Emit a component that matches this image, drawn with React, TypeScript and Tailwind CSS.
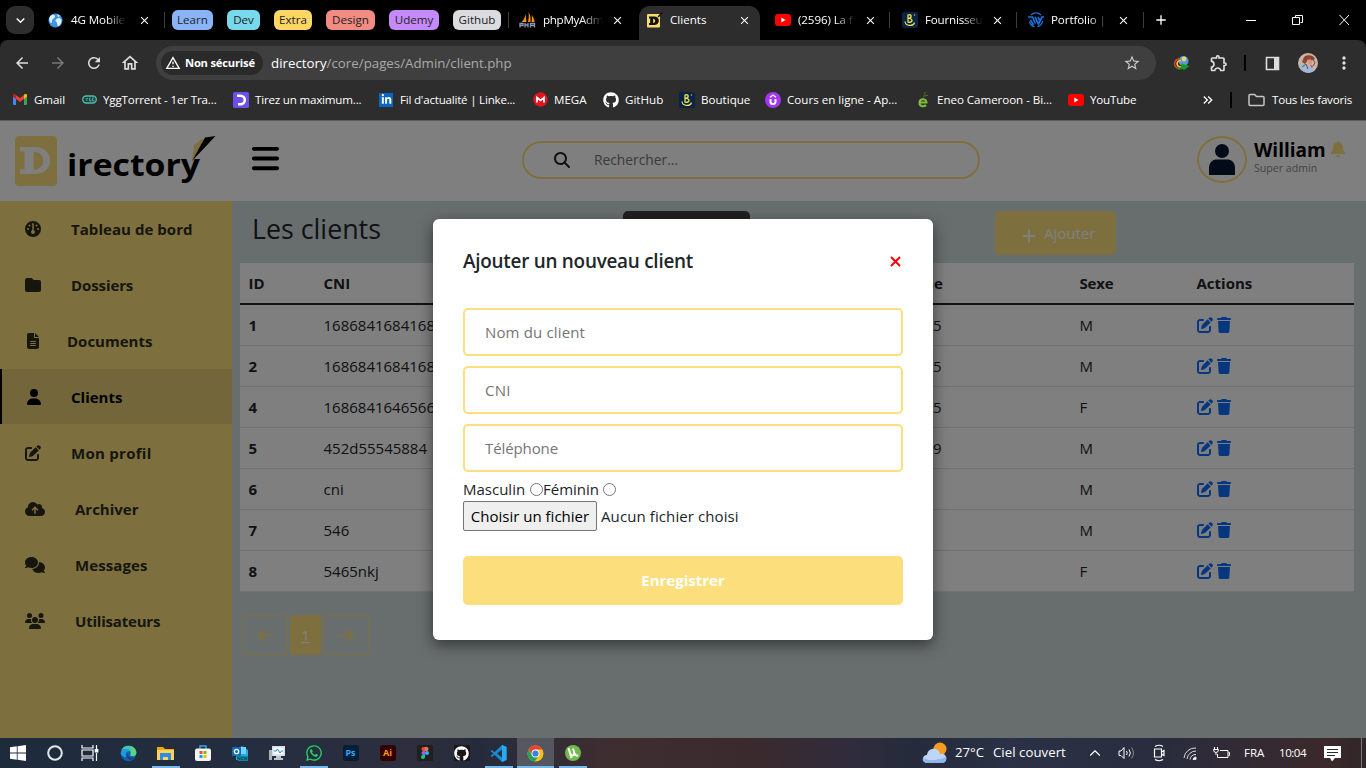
import React from "react";
import { FaBars, FaBell, FaCloudArrowUp, FaComments, FaFileLines, FaFolder, FaGauge, FaGithub, FaMagnifyingGlass, FaPenToSquare, FaTrash, FaUser, FaUsers, FaWhatsapp, FaLinkedinIn, FaArrowLeft, FaArrowRight, FaPlus } from "react-icons/fa6";
import { MdArrowBack, MdArrowForward, MdRefresh, MdOutlineHome, MdStarBorder, MdOutlineExtension, MdMoreVert, MdClose, MdAdd, MdOutlineWarningAmber, MdKeyboardArrowDown, MdKeyboardDoubleArrowRight } from "react-icons/md";
import { ChevronUp } from "lucide-react";

/* ---------- small drawings ---------- */

const Boutique = () => (
  <svg width="16" height="16" viewBox="0 0 16 16">
    <rect width="16" height="16" rx="2" fill="#0a2445" />
    <path d="M6 2.500v8M6 3c4-1.200 4.200 2.600.6 3.400 4.600-.4 4.600 4.400-.4 4" fill="none" stroke="#f2e14b" strokeWidth="1.300" />
    <path d="M3 9.500c.5 5 8.500 5 9.500 1" fill="none" stroke="#f2e14b" strokeWidth="1.200" />
    <circle cx="12.500" cy="3" r=".8" fill="#c9b14a" />
  </svg>
);

const DirectoryMark = () => (
  <svg width="17" height="17" viewBox="0 0 17 17">
    <rect x="1" y="2" width="13" height="13.500" rx="1" fill="#fcdb6d" />
    <path d="M3 4.500h5c6.500 0 6.500 8.500 0 8.500H3v-2h1.200V6.500H3zM7.200 6.700v4.200c2.600.2 2.600-4.400 0-4.200z" fill="#111" fillRule="evenodd" />
    <path d="M12 5l4.500-4.500" stroke="#111" strokeWidth="1.500" />
  </svg>
);

const Globe = () => (
  <svg width="15" height="15" viewBox="0 0 15 15">
    <circle cx="7.500" cy="7.500" r="7" fill="#3f94dd" />
    <path d="M2 3.500C4 1 7 1.500 7 3.500S3.500 6 4 8s-1 2.500-2 1-1-4 0-5.500zM8.500 6c2-2 5-1 5 1.500S12 12.500 10.500 13 9.500 9 8 8.500 7.500 7 8.500 6zM9 1l3 2-2 1z" fill="#d9f0ff" />
  </svg>
);

const PhpMyAdmin = () => (
  <svg width="17" height="16" viewBox="0 0 17 16">
    <path d="M6.500 2L7.500 10H2.500C5 8 6 5 6.500 2zM9.500 0c2 3 2.500 7 2 10H9c.8-3 1-7 .5-10zM12.500 3c2 2 3 5 3 7h-3c.5-2 .6-5 0-7z" fill="#f29111" />
    <path d="M1 15.500v-4h3v2H1M6 11v4.500M6 13h3M9 11v4.500M11.500 15.500v-4h4v4M11.500 13.500h4" fill="none" stroke="#8f94b5" strokeWidth="1.300" />
  </svg>
);

const Portfolio = () => (
  <svg width="16" height="16" viewBox="0 0 16 16" fill="none" stroke="#1773e0">
    <path d="M3 3a7 7 0 0110 0M14.500 9a7 7 0 01-5 5.800M6.500 14.800a7 7 0 01-5-5.300" strokeWidth="1.300" />
    <path d="M0 5h4.500l3 6.500M7 5l3.500 7L14 5h2M10 5l1.500 3M2.500 8l3 5" strokeWidth="1.700" />
  </svg>
);

const Gmail = () => (
  <svg width="14" height="11" viewBox="0 0 14 11">
    <path d="M0 2.500V10q0 1 1 1h2V4.500z" fill="#4285f4" />
    <path d="M14 2.500V10q0 1-1 1h-2V4.500z" fill="#34a853" />
    <path d="M11 1.200v3.700l3-2.200V1.500C14 0 12.200-.3 11 .6z" fill="#fbbc04" />
    <path d="M3 1.200v3.700L7 8l4-3.100V1L7 4z" fill="#ea4335" />
    <path d="M3 .8v4L0 2.700V1.500C0 0 1.800-.3 3 .6z" fill="#c5221f" />
  </svg>
);

const Ygg = () => (
  <svg width="15" height="9" viewBox="0 0 15 9">
    <rect x=".7" y="1" width="13.600" height="7" rx="3.500" fill="#14423e" stroke="#55b9a8" strokeWidth="1.400" />
    <path d="M3.500 3l1.300 1.500L6 3M4.800 4.500v1.700M9 3H7.500v3H9V4.700M12 3h-1.500v3H12V4.700" fill="none" stroke="#7ed8c8" strokeWidth=".6" />
  </svg>
);

const Tirez = () => (
  <svg width="16" height="16" viewBox="0 0 16 16">
    <rect width="16" height="16" rx="1.500" fill="#6f4de8" />
    <path d="M4 3.700h3.500a4.300 4.300 0 010 8.600H5" fill="none" stroke="#fff" strokeWidth="2.600" />
  </svg>
);

const Youtube = () => (
  <svg width="16" height="12" viewBox="0 0 16 12">
    <rect width="16" height="12" rx="3" fill="#f00" />
    <path d="M6.300 3.500v5l4.200-2.500z" fill="#fff" />
  </svg>
);

const Mega = () => (
  <svg width="15" height="15" viewBox="0 0 15 15">
    <circle cx="7.500" cy="7.500" r="7.200" fill="#e1141f" />
    <path d="M4 10.500v-5l3.500 3 3.500-3v5" fill="none" stroke="#fff" strokeWidth="1.700" />
  </svg>
);

const Cours = () => (
  <svg width="16" height="16" viewBox="0 0 16 16">
    <circle cx="8" cy="8" r="8" fill="#a435f0" />
    <path d="M5.500 7v2.800a2.500 2.300 0 005 0V7" fill="none" stroke="#fff" strokeWidth="2" />
    <path d="M5 5.300L8 3l3 2.300" fill="none" stroke="#fff" strokeWidth="1.300" />
  </svg>
);

const Eneo = () => (
  <svg width="13" height="16" viewBox="0 0 13 16" fill="none" stroke="#7fbf3b">
    <path d="M3 10.500h6.500C9.500 6.200 2.500 6 2.500 10.800c0 4 4.500 4.300 6.500 2.200" strokeWidth="2" />
    <path d="M7 5.500C6 3 8 4 8 0M8 4l3-1" strokeWidth=".9" stroke="#4b7d2e" />
  </svg>
);

const Idm = () => (
  <svg width="17" height="16" viewBox="0 0 17 16">
    <circle cx="10.500" cy="6" r="5" fill="#5e93dd" />
    <circle cx="11" cy="4" r="2.400" fill="#d4dc74" />
    <path d="M7 4C0 4 0 13 6 13.500" fill="none" stroke="#e2412c" strokeWidth="1.400" />
    <path d="M8 5.500C2.500 5.500 3 12 8 12" fill="none" stroke="#f4c52b" strokeWidth="1.600" />
    <path d="M3.500 13c4 1 5-1 5-4.500l8 2.500-6 4.500-.5-2c-2 1.500-5 1.500-6.500-.5" fill="#179c28" />
  </svg>
);

const Avatar = () => (
  <svg width="20" height="20" viewBox="0 0 20 20">
    <circle cx="10" cy="10" r="10" fill="#c9b3a8" />
    <path d="M1 12c5-2 10-1 16 5-4 4.500-13 4-16-5z" fill="#9fb9da" />
    <path d="M6 4c3-3 10-2 11 2l-4 2-3-1-3 4-3-2z" fill="#8d4532" />
    <path d="M9 7c3-2 6 0 5 3s-4 2-5-3z" fill="#d8977c" />
    <path d="M4 14l4-3 2 5M15 6l2 4-2 3" stroke="#735044" fill="none" />
    <path d="M12 12l3 1-1 2z" fill="#e12c40" />
  </svg>
);

const Logo = () => (
  <svg width="204" height="56" viewBox="0 0 204 56">
    <rect x="2" y="4" width="42" height="50" rx="4" fill="#fcdf7c" />
    <path d="M7 15h15c20 0 20 27 0 27H7v-4.500h4.500v-18H7zM20.500 20v17.500c13 1 13-18.500 0-17.500z" fill="#fff" fillRule="evenodd" />
    <path d="M179 29l2-16 8-6 2 2z" fill="#fcdf7c" />
    <path d="M179 29l13-23.500 10.500-1.500z" fill="#000" />
    <text x="54" y="43.700" fontFamily="Open Sans, sans-serif" fontSize="31" fontWeight="700" textLength="133" lengthAdjust="spacingAndGlyphs">irectory</text>
  </svg>
);

/* ---------- browser ---------- */

const Close = () => <MdClose className="shrink-0 text-[13px] text-white" />;

const Tab = ({ icon, label, className, labelClass }: { icon: React.ReactNode; label: string; className: string; labelClass: string }) => (
  <div className={"flex h-10 shrink-0 items-center " + className}>
    <span className="flex w-[17px] shrink-0 justify-center">{icon}</span>
    <span className={"ml-[7px] overflow-hidden whitespace-nowrap text-[11.600px] text-white " + labelClass}>{label}</span>
    <Close />
  </div>
);

const Fade = "[mask-image:linear-gradient(to_right,black_65%,transparent)]";

const Tabs = () => (
  <div className="flex h-10 items-center bg-black">
    <div className="ml-[6px] flex h-7 w-7 items-center justify-center rounded-[9px] bg-[#2d2d2d] text-[17px] text-white"><MdKeyboardArrowDown /></div>
    <Tab icon={<Globe />} label="4G Mobile" className="ml-[13px] w-[104px]" labelClass={"mr-[12px] w-[58px] tracking-[-0.1px] " + Fade} />
    <div className="ml-[13px] h-4 w-px bg-[#3b3b3b]" />
    <div className="ml-[7px] flex text-[11.600px] text-[#222]">
      <div className="flex h-5 w-[41px] items-center justify-center rounded-[6px] bg-[#8ab4f8]">Learn</div>
      <div className="ml-[14px] flex h-5 w-[33px] items-center justify-center rounded-[6px] bg-[#78d9ec]">Dev</div>
      <div className="ml-[14px] flex h-5 w-[38px] items-center justify-center rounded-[6px] bg-[#fdd663]">Extra</div>
      <div className="ml-[14px] flex h-5 w-[49px] items-center justify-center rounded-[6px] bg-[#f28b82]">Design</div>
      <div className="ml-[14px] flex h-5 w-[50px] items-center justify-center rounded-[6px] bg-[#c58af9]">Udemy</div>
      <div className="ml-[14px] flex h-5 w-[48px] items-center justify-center rounded-[6px] bg-[#dadce0]">Github</div>
    </div>
    <div className="ml-[7px] h-4 w-px bg-[#3b3b3b]" />
    <Tab icon={<PhpMyAdmin />} label="phpMyAdm" className="ml-[10px] w-[120px]" labelClass={"mr-[8px] w-[60px] tracking-[-0.3px] " + Fade} />
    <div className="h-[34px] w-[121px] self-end rounded-t-[11px] bg-[#2d2d2d]">
      <div className="-mt-[6px] flex h-10 items-center pl-[7px]">
        <DirectoryMark />
        <span className="ml-[7px] w-[68px] text-[11.600px] text-white">Clients</span>
        <Close />
      </div>
    </div>
    <Tab icon={<Youtube />} label="(2596) La f" className="ml-[14px] w-[103px]" labelClass={"mr-[9px] w-[59px] tracking-[-0.1px] " + Fade} />
    <div className="ml-[12px] h-4 w-px bg-[#3b3b3b]" />
    <Tab icon={<Boutique />} label="Fournisseu" className="ml-[11px] w-[103px]" labelClass={"mr-[8px] w-[60px] tracking-[-0.2px] " + Fade} />
    <div className="ml-[12px] h-4 w-px bg-[#3b3b3b]" />
    <Tab icon={<Portfolio />} label="Portfolio |" className="ml-[10px] w-[103px]" labelClass={"mr-[8px] w-[59px] tracking-[-0.1px] " + Fade} />
    <div className="ml-[13px] h-4 w-px bg-[#3b3b3b]" />
    <MdAdd className="ml-[9px] text-[16px] text-white" />
    <svg className="ml-auto mr-[15px]" width="105" height="12" viewBox="0 0 105 12" fill="none" stroke="#fff">
      <path d="M0 6.500h10M49.500 3.500v-2h7v7h-2M46.500 3.500h7v7h-7zM93.500 1l9.500 10M103 1l-9.500 10" />
    </svg>
  </div>
);

const Toolbar = () => (
  <div className="bg-black">
    <div className="flex h-10 w-full items-center rounded-t-[8px] bg-[#2d2d2d] pt-[6px] text-[#dedede]">
      <MdArrowBack className="ml-[13px] text-[18px]" />
      <MdArrowForward className="ml-[18px] text-[18px] text-[#777]" />
      <MdRefresh className="ml-[18px] text-[18px]" />
      <MdOutlineHome className="ml-[17px] text-[20px]" />
      <div className="ml-[16px] flex h-[34px] w-[1000px] items-center rounded-full bg-[#3f3f3f]">
        <div className="ml-[5px] flex h-6 w-[102px] items-center rounded-full bg-[#2a2a2a] pl-[4px] text-white">
          <MdOutlineWarningAmber className="text-[16px]" />
          <span className="ml-[4px] whitespace-nowrap text-[11.200px] font-bold tracking-[-0.2px]">Non sécurisé</span>
        </div>
        <span className="ml-[8px] pt-px text-[13.300px] text-[#aaa]"><span className="text-white">directory</span>/core/pages/Admin/client.php</span>
        <MdStarBorder className="ml-auto mr-[15px] text-[18px] text-[#c8c8c8]" />
      </div>
      <span className="ml-[17px]"><Idm /></span>
      <MdOutlineExtension className="ml-[19px] text-[20px]" />
      <div className="ml-[15px] h-4 w-[2px] bg-black" />
      <svg className="ml-[19px]" width="15" height="15" viewBox="0 0 15 15"><path d="M1.500 1.500h12v12h-12z" fill="none" stroke="#ddd" strokeWidth="1.600" /><path d="M9 1h5v13H9z" fill="#ddd" /></svg>
      <span className="ml-[18px]"><Avatar /></span>
      <MdMoreVert className="ml-[16px] text-[20px]" />
    </div>
  </div>
);

const Mark = ({ icon, label, className, gap }: { icon: React.ReactNode; label: string; className: string; gap: string }) => (
  <div className={"flex shrink-0 items-center whitespace-nowrap " + className}>
    {icon}
    <span className={gap}>{label}</span>
  </div>
);

const Bookmarks = () => (
  <div className="flex h-[41px] items-center border-b border-[#5b5b5b] bg-[#2d2d2d] pl-[13px] text-[11.600px] text-white">
    <Mark icon={<Gmail />} label="Gmail" gap="ml-[7px] tracking-[-0.1px]" className="w-[69px]" />
    <Mark icon={<Ygg />} label="YggTorrent - 1er Tra..." gap="ml-[6px] tracking-[-0.15px]" className="w-[151px]" />
    <Mark icon={<Tirez />} label="Tirez un maximum..." gap="ml-[6px] tracking-[-0.2px]" className="w-[146px]" />
    <Mark icon={<span className="flex h-[14px] w-[14px] items-center justify-center bg-[#0a66c2] text-[11px]"><FaLinkedinIn /></span>} label="Fil d'actualité | Linke..." gap="ml-[7px] tracking-[-0.22px]" className="w-[154px]" />
    <Mark icon={<Mega />} label="MEGA" gap="ml-[6px]" className="w-[70px]" />
    <Mark icon={<FaGithub className="text-[16px]" />} label="GitHub" gap="ml-[6px]" className="w-[76px]" />
    <Mark icon={<Boutique />} label="Boutique" gap="ml-[6px]" className="w-[86px]" />
    <Mark icon={<Cours />} label="Cours en ligne - Ap..." gap="ml-[6px]" className="w-[152px]" />
    <Mark icon={<Eneo />} label="Eneo Cameroon - Bi..." gap="ml-[7px] tracking-[-0.05px]" className="w-[151px]" />
    <Mark icon={<Youtube />} label="YouTube" gap="ml-[6px] tracking-[-0.2px]" className="w-[132px]" />
    <MdKeyboardDoubleArrowRight className="text-[16px]" />
    <div className="ml-[14px] h-4 w-[2px] bg-black" />
    <svg className="ml-[16px]" width="17" height="14" viewBox="0 0 17 14" fill="none" stroke="#c5c5c5" strokeWidth="1.500"><path d="M2 1.500h4.500l2 2H15q1 0 1 1v7q0 1-1 1H2q-1 0-1-1v-9q0-1 1-1z" /></svg>
    <span className="ml-[7px] whitespace-nowrap tracking-[-0.2px]">Tous les favoris</span>
  </div>
);

/* ---------- page ---------- */

const Header = () => (
  <header className="flex h-20 items-start bg-white">
    <div className="ml-[13px] mt-[11px]"><Logo /></div>
    <FaBars className="ml-[33px] mt-[22px] text-[31px] text-black" />
    <div className="ml-[241px] mt-[20px] flex h-[38px] w-[458px] items-center rounded-full border-2 border-[#fcdf7c]">
      <FaMagnifyingGlass className="ml-[30px] text-[16px] text-[#222]" />
      <span className="ml-[24px] text-[13.800px] text-[#757575]">Rechercher...</span>
    </div>
    <div className="ml-[217px] mt-[15px] flex h-[47px] w-[50px] items-center justify-center rounded-[50%] border-2 border-[#fcdf7c]">
      <svg width="26" height="31" viewBox="0 0 26 31" fill="#061632"><circle cx="13" cy="7" r="7" /><path d="M0 31v-7c0-6 4-8.500 8-8.500h10c4 0 8 2.500 8 8.500v7z" /></svg>
    </div>
    <div className="ml-[7px] mt-[16px] w-[76px] whitespace-nowrap">
      <div className="text-[19px] font-bold leading-[26px] text-black">William</div>
      <div className="text-[10.600px] leading-[11px] text-[#888]">Super admin</div>
    </div>
    <FaBell className="mt-[20px] text-[16px] text-[#fcdf7c]" />
  </header>
);

const menu = [
  { icon: <FaGauge />, label: "Tableau de bord", at: "w-[46px]", fit: "tracking-[0.05px]" },
  { icon: <FaFolder />, label: "Dossiers", at: "w-[46px]", fit: "tracking-[-0.1px]" },
  { icon: <FaFileLines />, label: "Documents", at: "w-[42px]", fit: "" },
  { icon: <FaUser className="ml-px text-[16px]" />, label: "Clients", at: "w-[46px]", fit: "", active: true },
  { icon: <FaPenToSquare />, label: "Mon profil", at: "w-[46px]", fit: "tracking-[0.28px]" },
  { icon: <FaCloudArrowUp className="w-5" />, label: "Archiver", at: "w-[50px]", fit: "" },
  { icon: <FaComments className="w-5" />, label: "Messages", at: "w-[50px]", fit: "tracking-[0.1px]" },
  { icon: <FaUsers className="w-5" />, label: "Utilisateurs", at: "w-[50px]", fit: "tracking-[-0.2px]" },
];

const Sidebar = () => (
  <nav className="w-[232px] shrink-0 bg-[#fcdf7c]">
    {menu.map((m) => (
      <div
        key={m.label}
        className={
          "mb-px flex h-[55px] items-center border-l-2 pl-[23px] pt-px text-[15px] " +
          (m.active ? "border-black bg-[#e5cc75] text-black" : "border-transparent text-[#2d2d1c]")
        }
      >
        <span className={"flex text-[16px] " + m.at}>{m.icon}</span>
        <span className={"font-bold " + m.fit}>{m.label}</span>
      </div>
    ))}
  </nav>
);

const rows = [
  ["1", "1686841684168", "699555555", "M"],
  ["2", "1686841684168", "699555555", "M"],
  ["4", "1686841646566", "699555555", "F"],
  ["5", "452d55545884", "699555559", "M"],
  ["6", "cni", "6995", "M"],
  ["7", "546", "6995", "M"],
  ["8", "5465nkj", "6995555s", "F"],
];

const grid = "grid grid-cols-[75px_541px_215px_117px_1fr] items-center pl-[8.5px]";

const Main = () => (
  <main className="flex-1 bg-[#d1dbdd] px-[8px]">
    <div className="flex h-[62px] items-start">
      <h1 className="ml-[12px] mt-[8px] w-[371px] text-[26.800px] font-medium leading-[40px] text-[#212529]">Les clients</h1>
      <div className="mt-[10px] h-[44px] w-[127px] rounded-[5px] bg-[#414141]" />
      <div className="ml-[245px] mt-[10px] flex h-[44px] w-[121px] items-center rounded-[5px] bg-[#fcdf7c] pl-[26px] text-[15px] text-white">
        <FaPlus className="mt-[5px] text-[16px]" />
        <span className="ml-[7px]">Ajouter</span>
      </div>
    </div>
    <div className="w-[1114px] bg-white text-[15px] text-[#212529]">
      <div className={grid + " h-[42px] border-b-2 border-[#212529] font-bold"}>
        <span>ID</span><span>CNI</span><span>Téléphone</span><span className="tracking-[-0.2px]">Sexe</span><span>Actions</span>
      </div>
      {rows.map((r) => (
        <div key={r[0]} className={grid + " h-[41px] border-b border-[#dee2e6]"}>
          <span className="font-bold">{r[0]}</span>
          <span>{r[1]}</span>
          <span>{r[2]}</span>
          <span>{r[3]}</span>
          <span className="flex gap-[3px] text-[16px] text-[#0d6efd]"><FaPenToSquare /><FaTrash className="w-[16px]" /></span>
        </div>
      ))}
    </div>
    <div className="ml-[2px] mt-[23px] flex gap-[2px] text-[17px] text-[#fcdf7c]">
      <div className="flex h-[40px] w-[46px] items-center justify-center rounded-[3px] border border-[#fcdf7c]"><FaArrowLeft /></div>
      <div className="flex h-[40px] w-[31px] items-center justify-center rounded-[3px] bg-[#fcdf7c] text-[15px] text-white underline">1</div>
      <div className="flex h-[40px] w-[46px] items-center justify-center rounded-[3px] border border-[#fcdf7c]"><FaArrowRight /></div>
    </div>
  </main>
);

const Field = ({ label, fit }: { label: string; fit: string }) => (
  <div className={"mb-[10px] flex h-[48px] items-center rounded-[5px] border-2 border-[#fcdf7c] pl-[20px] text-[15px] text-[#757575] " + fit}>{label}</div>
);

const Radio = () => <span className="inline-block h-[13px] w-[13px] rounded-full border border-[#767676] bg-white" />;

const Modal = () => (
  <div className="absolute left-[433px] top-[98px] h-[421px] w-[500px] rounded-[6px] bg-white px-[30px] text-[15px] text-[#212529] shadow-[0_5px_15px_rgba(0,0,0,0.5)]">
    <div className="flex h-[89px] items-center justify-between pb-[4px]">
      <h2 className="text-[18.900px] font-semibold tracking-[-0.25px]">Ajouter un nouveau client</h2>
      <svg className="mr-[2px]" width="11" height="11" viewBox="0 0 11 11"><path d="M1 1l9 9M10 1l-9 9" stroke="#f00" strokeWidth="2" /></svg>
    </div>
    <Field label="Nom du client" fit="tracking-[0.15px]" />
    <Field label="CNI" fit="tracking-[0.2px]" />
    <Field label="Téléphone" fit="tracking-[-0.1px]" />
    <div className="-mt-[5px] flex h-[24px] items-center whitespace-nowrap">
      <span className="w-[67px]">Masculin</span><Radio /><span className="w-[60px]">Féminin</span><Radio />
    </div>
    <div className="flex items-center">
      <div className="flex h-[30px] w-[134px] items-center justify-center whitespace-nowrap rounded-[2px] border border-[#767676] bg-[#efefef] text-black">Choisir un fichier</div>
      <span className="ml-[4px] tracking-[0.1px]">Aucun fichier choisi</span>
    </div>
    <div className="mt-[25px] flex h-[49px] items-center justify-center rounded-[5px] bg-[#fcdf7c] font-bold text-white">Enregistrer</div>
  </div>
);

/* ---------- taskbar ---------- */

const Slot = ({ children, bar, active }: { children: React.ReactNode; bar?: boolean; active?: boolean }) => (
  <div className={"flex h-[30px] w-[37px] shrink-0 flex-col items-center " + (active ? "bg-[#55565f]" : "")}>
    <div className="flex h-[28px] items-center pt-[2px]">{children}</div>
    {bar && <div className={"h-[2px] bg-[#76b9ed] " + (active ? "w-[37px]" : "w-[28px]")} />}
  </div>
);

const Taskbar = () => (
  <footer className="flex h-[30px] items-center bg-[linear-gradient(90deg,#1d2b3b_0%,#262e40_22%,#2e2e3d_30%,#252b3c_35%,#3f2e30_45%,#3a2a2d_55%,#302c3b_62%,#252b3c_67%,#2b3146_74%,#292c3d_85%,#3b292b_97%,#302629_100%)] text-white">
    <div className="-ml-px flex">
      <Slot><svg width="16" height="16" viewBox="0 0 16 16" fill="#fff"><path d="M0 2.200L6.800 1.300v6.300H0zM7.600 1.200L16 0v7.600H7.600zM0 8.400h6.800v6.300L0 13.800zM7.600 8.400H16V16l-8.400-1.200z" /></svg></Slot>
      <Slot><svg width="16" height="16" viewBox="0 0 16 16" fill="none" stroke="#e4e8ea" strokeWidth="2"><circle cx="8" cy="8" r="6.800" /></svg></Slot>
      <Slot><svg className="-ml-[3px]" width="18" height="16" viewBox="0 0 18 16" fill="none" stroke="#fff" strokeWidth="1.200"><path d="M1 0v3h11V0M1 16v-3h11v3M1 5h11v6H1zM15.500 0v4M15.500 8v8" /><path d="M14.300 4.500h2.500v2.500h-2.500z" fill="#fff" /></svg></Slot>
      <Slot>
        <svg width="17" height="17" viewBox="0 0 24 24"><circle cx="12" cy="12" r="11" fill="#0d62b8" /><path d="M1 11C3 5 11 4 14 9c-6-1-7 4-5 8-5 0-8-3-8-6z" fill="#1c9de0" /><path d="M1.500 9C4-2 21-1 23 10c1 6-5 6.500-8 5-1-1 1-2 0-5C12 4 4 5 1.500 9z" fill="#45c6b0" /><path d="M15 1.500c5 1 8 5 8 9 0 5-5 5.500-8 4.500-1-1 1-2 0-5z" fill="#62d47d" opacity=".8" /><path d="M11.500 12c-1.500 6 5 7.500 10 5-2 3-5 4-7 4-5-1-6-7-3-9z" fill="#21416c" /></svg>
      </Slot>
      <Slot bar><svg width="17" height="15" viewBox="0 0 17 15"><path d="M0 1h6l2 2h9v11H0z" fill="#f3a900" /><path d="M0 4h17v10H0z" fill="#ffd25e" /><path d="M3 14V7h11v7h-3v-3H6v3z" fill="#2d8de0" /></svg></Slot>
      <Slot><svg width="16" height="16" viewBox="0 0 16 16"><path d="M5 4V1h6v3" fill="none" stroke="#35a8e5" strokeWidth="1.500" /><rect y="3.500" width="16" height="12.500" rx="2" fill="#f4f4f4" /><path d="M4.500 6h3v3h-3z" fill="#f25022" /><path d="M8.500 6h3v3h-3z" fill="#7fba00" /><path d="M4.500 10h3v3h-3z" fill="#00a4ef" /><path d="M8.500 10h3v3h-3z" fill="#ffb900" /></svg></Slot>
      <Slot><svg width="16" height="16" viewBox="0 0 16 16"><path d="M4 5l6-4 6 4v10H4z" fill="#28a8ea" /><path d="M8 2h6v7H8z" fill="#75d2fa" /><rect y="2" width="9" height="9" rx="1" fill="#0f6cbd" /><circle cx="4.500" cy="6.500" r="2.200" fill="none" stroke="#fff" strokeWidth="1.300" /><path d="M4 11h12v5H6z" fill="#0c879c" /><path d="M6 14.500v-2l1.500 2v-2M11 12.500H9v2h2M12 12.500l.7 2 .7-2 .7 2 .7-2" fill="none" stroke="#063b49" strokeWidth=".7" /></svg></Slot>
      <Slot><svg width="16" height="16" viewBox="0 0 16 16"><path d="M0 5h3v10H0z" fill="#aab1b5" /><path d="M3 1h13v10H3z" fill="#d7dee2" /><path d="M4.500 2.500h10v7h-10z" fill="#f0fbff" /><path d="M5 6h2l1.500-2L11 8l1.500-2H14" fill="none" stroke="#2c8bc4" /><path d="M7 11h5v2h2v2H5v-2h2z" fill="#bfc6ca" /></svg></Slot>
      <Slot bar><FaWhatsapp className="text-[18px] text-[#25d366]" /></Slot>
      <Slot><span className="flex h-4 w-4 items-center justify-center rounded-[3px] bg-[#001e36] text-[9px] font-bold text-[#31a8ff]">Ps</span></Slot>
      <Slot><span className="flex h-4 w-4 items-center justify-center rounded-[3px] bg-[#330000] text-[9px] font-bold text-[#ff9a00]">Ai</span></Slot>
      <Slot><svg width="16" height="16" viewBox="0 0 16 16"><path d="M0 0h16v16H0z" fill="#202020" /><path d="M8 2H6.500a2 2 0 000 4H8z" fill="#f24e1e" /><path d="M8 2h1.500a2 2 0 010 4H8z" fill="#ff7262" /><path d="M8 6H6.500a2 2 0 000 4H8z" fill="#a259ff" /><circle cx="10" cy="8" r="2" fill="#1abcfe" /><path d="M8 10H6.500a2 2 0 101.500 2z" fill="#0acf83" /></svg></Slot>
      <Slot><span className="flex h-4 w-4 items-center justify-center bg-[#181818]"><FaGithub className="text-[15px]" /></span></Slot>
      <Slot bar><svg width="17" height="17" viewBox="0 0 17 17"><path d="M12 0l4.500 2v13L12 17 4.500 9.700 2 12 .5 11l3-2.500-3-2.500L2 5l2.500 2.300z" fill="#168bd5" /><path d="M12 4.500v8L7 8.500z" fill="#28303f" /><path d="M12 0l4.500 2v13L12 17z" fill="#2aa8f2" /></svg></Slot>
      <Slot bar active>
        <svg width="17" height="17" viewBox="0 0 17 17"><circle cx="8.500" cy="8.500" r="8" fill="#fbc116" /><path d="M1.600 4.500A8 8 0 0115.400 4.500H8.500L5 10.500z" fill="#ea4335" /><path d="M1.600 4.500A8 8 0 007.800 16.500l4-6H5z" fill="#22a35a" /><circle cx="8.500" cy="8.500" r="4" fill="#fff" /><circle cx="8.500" cy="8.500" r="3.100" fill="#3b7de9" /></svg>
      </Slot>
      <Slot bar><svg width="16" height="16" viewBox="0 0 16 16"><circle cx="8" cy="8" r="8" fill="#72b84a" /><path d="M3.500 3l3 10M5 7.500c1 4.500 5 3.500 4-.5L8 3.500M10 8.500c.5 2.500 2 2.500 3 1.500" fill="none" stroke="#fff" strokeWidth="2" /></svg></Slot>
    </div>
    <svg className="ml-[331px]" width="26" height="22" viewBox="0 0 26 22"><circle cx="18" cy="7" r="6.500" fill="#f79a22" /><path d="M5 21C-1 20 0 13 5 13c1-8 12-8 13-1 7-2 9 8 2 9z" fill="#bdd5f7" /><path d="M4 21c-3-1-4-3-3-5 5 3 14 3 23-1 1 3-1 6-4 6z" fill="#8eb5ec" /></svg>
    <span className="ml-[7px] w-[38px] whitespace-nowrap text-[13.200px]">27°C</span>
    <span className="w-[93px] whitespace-nowrap text-[13.200px] tracking-[0.05px]">Ciel couvert</span>
    <ChevronUp size={18} strokeWidth={1.500} />
    <svg className="ml-[14px]" width="17" height="14" viewBox="0 0 17 14" fill="none" stroke="#fff"><path d="M1 5h2l3-3.500v11L3 9.500H1zM8.500 5q1.500 2 0 4M11 3.500q2.800 3.500 0 7" /><path d="M13.500 1.500q4 5.500 0 11" stroke="#888" /></svg>
    <svg className="ml-[16px]" width="16" height="18" viewBox="0 0 16 18" fill="none" stroke="#fff" strokeWidth="1.200"><path d="M4 2.500q4-2.500 8 0M4 15.500q4 2.500 8 0M3.500 5h7v8h-7zM10.500 8l2.500-1.500v5L10.500 10" /></svg>
    <svg className="ml-[16px]" width="15" height="15" viewBox="0 0 15 15" fill="none" stroke="#ddd"><path d="M1 12A11 11 0 0113 2M4 13a9 9 0 019-8M7 13.500a6 6 0 016-5" /><path d="M10 13.500a3 3 0 013-2.500v2.500z" fill="#fff" /></svg>
    <svg className="ml-[15px]" width="17" height="12" viewBox="0 0 17 12" fill="none" stroke="#fff"><path d="M7 3.500h8v7H4.500V7M15.500 5.500h1v3h-1M1.500 0v2.500M4.500 0v2.500M.5 2.500h5q0 3-2.500 3t-2.500-3M3 5.500V8" /></svg>
    <span className="ml-[14px] w-[35px] text-[11.600px] tracking-[-0.1px]">FRA</span>
    <span className="w-[45px] text-[11.600px] tracking-[-0.5px]">10:04</span>
    <svg width="17" height="17" viewBox="0 0 17 17"><path d="M0 1h17v12h-6l-3 3.500L6 13H0z" fill="#fff" /><path d="M3 4.500h11M3 7.500h11M3 10.500h8" stroke="#2a2a35" /></svg>
    <div className="ml-auto mr-[4px] h-[30px] w-px bg-[#777]" />
  </footer>
);

export default function App() {
  return (
    <div className="flex h-[768px] w-[1366px] flex-col overflow-hidden font-['Open_Sans',sans-serif]">
      <Tabs />
      <Toolbar />
      <Bookmarks />
      <div className="relative flex h-[617px] flex-col">
        <Header />
        <div className="flex flex-1">
          <Sidebar />
          <Main />
        </div>
        <div className="absolute inset-0 bg-black/50" />
        <Modal />
      </div>
      <Taskbar />
    </div>
  );
}
